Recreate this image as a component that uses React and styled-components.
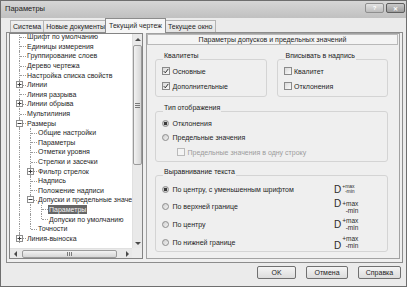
import React from 'react';
import styled, { createGlobalStyle, css } from 'styled-components';

const GlobalStyle = createGlobalStyle`
  html, body {
    margin: 0;
    padding: 0;
    background: #ffffff;
  }
  body {
    font-family: "Liberation Sans", Arial, sans-serif;
    font-size: 7px;
    color: #1e1e1e;
  }
  * {
    box-sizing: border-box;
  }
`;

const Window = styled.div`
  width: 407px;
  height: 287px;
  border: 1px solid #6e6e6e;
  background: #ebebeb;
  display: flex;
  flex-direction: column;
  overflow: hidden;
`;

const TitleBar = styled.div`
  flex: none;
  height: 17px;
  display: flex;
  align-items: flex-start;
  justify-content: space-between;
  padding: 2px 1px 0 4px;
  background: linear-gradient(#d6d6d6, #c0c0c0);
`;

const Caption = styled.span`
  font-size: 7.5px;
  line-height: 11px;
  color: #222;
`;

const TitleButtons = styled.div`
  display: flex;
  gap: 2px;
`;

const TitleButton = styled.span`
  width: 19px;
  height: 10px;
  border: 1px solid ${({ $close }) => ($close ? '#5e5e5e' : '#8f8f8f')};
  border-radius: 2px;
  background: ${({ $close }) =>
    $close ? 'linear-gradient(#c9c9c9, #9d9d9d)' : 'linear-gradient(#e2e2e2, #bdbdbd)'};
  display: flex;
  align-items: center;
  justify-content: center;
  font-size: 6px;
  font-weight: bold;
  color: #fdfdfd;
`;

const TabStrip = styled.div`
  flex: none;
  height: 14px;
  display: flex;
  align-items: flex-end;
  padding-left: 9px;
  position: relative;
  z-index: 1;
`;

const Tab = styled.span`
  height: 12px;
  padding: 0 2px;
  margin-right: -1px;
  border: 1px solid #b4b4b4;
  border-bottom: none;
  background: linear-gradient(#f1f1f1, #e4e4e4);
  line-height: 11px;
  white-space: nowrap;

  ${({ $active }) =>
    $active &&
    css`
      height: 15px;
      margin: 0 -1px -1px -2px;
      padding: 0 3px;
      background: #f6f6f6;
      border-color: #8c8c8c;
      line-height: 13px;
      position: relative;
      z-index: 2;
    `}
`;

const TabPanel = styled.div`
  flex: none;
  width: 397px;
  height: 231px;
  margin-left: 5px;
  border: 1px solid #8c8c8c;
  background: #efefef;
  display: flex;
  gap: 3px;
  padding: 0 2px 3px 2px;
`;

const TreeBox = styled.div`
  width: 134px;
  flex: none;
  border: 1px solid #848484;
  background: #ffffff;
  display: grid;
  grid-template-columns: 1fr 10px;
  grid-template-rows: 1fr 10px;
  overflow: hidden;
`;

const TreeList = styled.div`
  overflow: hidden;
  padding: 0 0 0 4px;
  margin-top: -2px;
`;

const TreeRow = styled.div`
  height: 9.6px;
  display: flex;
  align-items: center;
  white-space: nowrap;
`;

const dotted = '1px dotted #9a9a9a';

const Guide = styled.span`
  position: relative;
  flex: none;
  width: 11px;
  align-self: stretch;

  ${({ $line }) =>
    $line &&
    css`
      &::before {
        content: '';
        position: absolute;
        left: 5px;
        top: 0;
        bottom: 0;
        border-left: ${dotted};
      }
    `}
`;

const Branch = styled.span`
  position: relative;
  flex: none;
  width: 11px;
  align-self: stretch;

  &::before {
    content: '';
    position: absolute;
    left: 5px;
    top: 0;
    height: ${({ $last }) => ($last ? '50%' : '100%')};
    border-left: ${dotted};
  }
  &::after {
    content: '';
    position: absolute;
    left: 6px;
    right: -1px;
    top: 50%;
    border-top: ${dotted};
  }
`;

const Expander = styled.span`
  position: absolute;
  left: 2px;
  top: 1.3px;
  width: 7px;
  height: 7px;
  border: 1px solid #8e8e8e;
  background: #ffffff;
  z-index: 1;
  display: flex;
`;

const Label = styled.span`
  margin-left: 1px;
  padding: 0 1px;
  line-height: 9px;
  color: ${({ $selected }) => ($selected ? '#f4f4f4' : '#1e1e1e')};
  background: ${({ $selected }) => ($selected ? '#666666' : 'transparent')};
`;

const VScroll = styled.div`
  display: flex;
  flex-direction: column;
  background: #e9e9e9;
  border-left: 1px solid #e0e0e0;
`;

const HScroll = styled.div`
  display: flex;
  align-items: center;
  background: #e9e9e9;
  border-top: 1px solid #e0e0e0;
`;

const Corner = styled.div`
  background: #ececec;
`;

const ArrowCell = styled.span`
  flex: none;
  width: 10px;
  height: 10px;
  display: flex;
  align-items: center;
  justify-content: center;
`;

const Thumb = styled.span`
  flex: none;
  display: flex;
  align-items: center;
  justify-content: center;
  border: 1px solid #9b9b9b;
  border-radius: 2px;
  ${({ $vertical }) =>
    $vertical
      ? css`
          margin: 1px 0 0 0;
          width: 9px;
          height: 120px;
          background: linear-gradient(90deg, #f2f2f2, #d6d6d6);
        `
      : css`
          margin-left: 2px;
          width: 95px;
          height: 8px;
          background: linear-gradient(#f2f2f2, #d6d6d6);
        `}
`;

const Spacer = styled.span`
  flex: 1;
`;

const SettingsPanel = styled.div`
  flex: 1;
  border: 1px solid #a2a2a2;
  background: #efefef;
  display: flex;
  flex-direction: column;
`;

const PanelHeader = styled.div`
  height: 11px;
  margin: 0 1px 0 0;
  border: 1px solid #b9b9b9;
  background: #f4f4f4;
  text-align: center;
  line-height: 9px;
`;

const PanelBody = styled.div`
  padding: 0 11px 0 8px;
  display: flex;
  flex-direction: column;
`;

const GroupRow = styled.div`
  display: flex;
  gap: 10px;
  margin-top: 7px;
`;

const Group = styled.fieldset`
  margin: ${({ $top }) => $top || 0}px 0 0 0;
  flex: 1;
  min-width: 0;
  border: 1px solid #d4d4d4;
  border-radius: 3px;
  padding: 0 0 ${({ $pb }) => $pb || 4}px 6px;
  display: flex;
  flex-direction: column;
  gap: ${({ $gap }) => $gap || 5}px;

  legend {
    font-size: 7px;
    line-height: 8px;
    padding: 0 1px 6px;
    margin-left: 1px;
    color: #222;
  }
`;

const Option = styled.div`
  height: ${({ $tall }) => ($tall ? 14 : 10)}px;
  display: flex;
  align-items: center;
  gap: 2.5px;
  padding-left: ${({ $indent }) => $indent || 0}px;
  color: ${({ $disabled }) => ($disabled ? '#9c9c9c' : '#1e1e1e')};
  white-space: nowrap;
`;

const CheckBox = styled.span`
  flex: none;
  width: 8px;
  height: 8px;
  border: 1px solid ${({ $disabled }) => ($disabled ? '#bababa' : '#8a8a8a')};
  background: ${({ $disabled }) =>
    $disabled ? '#f4f4f4' : 'linear-gradient(135deg, #d9d9d9, #fbfbfb)'};
  display: flex;
  align-items: center;
  justify-content: center;
`;

const Radio = styled.span`
  flex: none;
  width: 7px;
  height: 7px;
  margin-right: 1px;
  border-radius: 50%;
  border: 1px solid #8d8d8d;
  background: ${({ $checked }) =>
    $checked
      ? 'radial-gradient(circle, #3a3a3a 0 1.5px, #cfcfcf 2px)'
      : 'linear-gradient(135deg, #cfcfcf, #f2f2f2)'};
`;

const Sample = styled.div`
  margin-left: auto;
  margin-right: 23px;
  width: 30px;
  height: 14px;
  display: flex;
  gap: 1px;
  align-items: ${({ $align }) =>
    ({ top: 'flex-start', bottom: 'flex-end', center: 'center', small: 'center' })[$align]};
  color: #2a2a2a;
`;

const BigD = styled.span`
  font-size: 10px;
  line-height: 7px;
`;

const Limits = styled.span`
  display: flex;
  flex-direction: column;
  align-items: flex-end;
  font-size: ${({ $small }) => ($small ? 5 : 6.5)}px;
  line-height: ${({ $small }) => ($small ? 5.5 : 7)}px;
`;

const Footer = styled.div`
  flex: none;
  display: flex;
  justify-content: flex-end;
  gap: 10px;
  margin-top: 3px;
  padding-right: 5px;
`;

const Button = styled.span`
  width: ${({ $w }) => $w}px;
  height: 13px;
  border: 1px solid #707070;
  border-radius: 2px;
  background: linear-gradient(#f4f4f4, #dcdcdc);
  display: flex;
  align-items: center;
  justify-content: center;
`;

const Arrow = ({ dir }) => {
  const pts = {
    up: '1,4 4,1 7,4',
    down: '1,1 4,4 7,1',
    left: '4,1 1,4 4,7',
    right: '1,1 4,4 1,7',
  }[dir];
  const vert = dir === 'up' || dir === 'down';
  return (
    <svg width={vert ? 8 : 5} height={vert ? 5 : 8} viewBox={vert ? '0 0 8 5' : '0 0 5 8'}>
      <polygon points={pts} fill="#4a4a4a" />
    </svg>
  );
};

const ToggleIcon = ({ open }) => (
  <svg width="5" height="5" viewBox="0 0 5 5">
    <line x1="0.5" y1="2.5" x2="4.5" y2="2.5" stroke="#3c3c3c" strokeWidth="1" />
    {!open && <line x1="2.5" y1="0.5" x2="2.5" y2="4.5" stroke="#3c3c3c" strokeWidth="1" />}
  </svg>
);

const Check = () => (
  <svg width="6" height="6" viewBox="0 0 6 6">
    <path d="M0.8 3.2 L2.3 4.8 L5.3 0.9" fill="none" stroke="#2e2e2e" strokeWidth="1" />
  </svg>
);

const treeItems = [
  { text: 'Шрифт по умолчанию', guides: [] },
  { text: 'Единицы измерения', guides: [] },
  { text: 'Группирование слоев', guides: [] },
  { text: 'Дерево чертежа', guides: [] },
  { text: 'Настройка списка свойств', guides: [] },
  { text: 'Линии', guides: [], toggle: 'closed' },
  { text: 'Линия разрыва', guides: [] },
  { text: 'Линии обрыва', guides: [], toggle: 'closed' },
  { text: 'Мультилиния', guides: [] },
  { text: 'Размеры', guides: [], toggle: 'open' },
  { text: 'Общие настройки', guides: [true] },
  { text: 'Параметры', guides: [true] },
  { text: 'Отметки уровня', guides: [true] },
  { text: 'Стрелки и засечки', guides: [true] },
  { text: 'Фильтр стрелок', guides: [true], toggle: 'closed' },
  { text: 'Надпись', guides: [true] },
  { text: 'Положение надписи', guides: [true] },
  { text: 'Допуски и предельные значения', guides: [true], toggle: 'open' },
  { text: 'Параметры', guides: [true, true], selected: true },
  { text: 'Допуски по умолчанию', guides: [true, true], last: true },
  { text: 'Точности', guides: [true], last: true },
  { text: 'Линия-выноска', guides: [], toggle: 'closed' },
];

const alignRows = [
  { text: 'По центру, с уменьшенным шрифтом', align: 'small', checked: true },
  { text: 'По верхней границе', align: 'top' },
  { text: 'По центру', align: 'center' },
  { text: 'По нижней границе', align: 'bottom' },
];

export default function App() {
  return (
    <>
      <GlobalStyle />
      <Window>
        <TitleBar>
          <Caption>Параметры</Caption>
          <TitleButtons>
            <TitleButton>?</TitleButton>
            <TitleButton $close>✕</TitleButton>
          </TitleButtons>
        </TitleBar>

        <TabStrip>
          <Tab>Система</Tab>
          <Tab>Новые документы</Tab>
          <Tab $active>Текущий чертеж</Tab>
          <Tab>Текущее окно</Tab>
        </TabStrip>

        <TabPanel>
          <TreeBox>
            <TreeList>
              {treeItems.map((item, i) => (
                <TreeRow key={i}>
                  {item.guides.map((on, g) => (
                    <Guide key={g} $line={on} />
                  ))}
                  <Branch $last={item.last}>
                    {item.toggle && (
                      <Expander>
                        <ToggleIcon open={item.toggle === 'open'} />
                      </Expander>
                    )}
                  </Branch>
                  <Label $selected={item.selected}>{item.text}</Label>
                </TreeRow>
              ))}
            </TreeList>
            <VScroll>
              <ArrowCell><Arrow dir="up" /></ArrowCell>
              <Thumb $vertical>
                <svg width="5" height="5" viewBox="0 0 5 5">
                  <path d="M0 0.5H5M0 2.5H5M0 4.5H5" stroke="#7a7a7a" strokeWidth="1" />
                </svg>
              </Thumb>
              <Spacer />
              <ArrowCell><Arrow dir="down" /></ArrowCell>
            </VScroll>
            <HScroll>
              <ArrowCell><Arrow dir="left" /></ArrowCell>
              <Thumb>
                <svg width="5" height="4" viewBox="0 0 5 4">
                  <path d="M0.5 0V4M2.5 0V4M4.5 0V4" stroke="#7a7a7a" strokeWidth="1" />
                </svg>
              </Thumb>
              <Spacer />
              <ArrowCell><Arrow dir="right" /></ArrowCell>
            </HScroll>
            <Corner />
          </TreeBox>

          <SettingsPanel>
            <PanelHeader>Параметры допусков и предельных значений</PanelHeader>
            <PanelBody>
              <GroupRow>
                <Group $pb={5}>
                  <legend>Квалитеты</legend>
                  <Option>
                    <CheckBox><Check /></CheckBox>
                    Основные
                  </Option>
                  <Option>
                    <CheckBox><Check /></CheckBox>
                    Дополнительные
                  </Option>
                </Group>
                <Group $pb={5}>
                  <legend>Вписывать в надпись</legend>
                  <Option>
                    <CheckBox />
                    Квалитет
                  </Option>
                  <Option>
                    <CheckBox />
                    Отклонения
                  </Option>
                </Group>
              </GroupRow>

              <Group $top={7} $gap={4.5} $pb={4}>
                <legend>Тип отображения</legend>
                <Option>
                  <Radio $checked />
                  Отклонения
                </Option>
                <Option>
                  <Radio />
                  Предельные значения
                </Option>
                <Option $indent={15} $disabled>
                  <CheckBox $disabled />
                  Предельные значения в одну строку
                </Option>
              </Group>

              <Group $top={6} $gap={3.7} $pb={2}>
                <legend>Выравнивание текста</legend>
                {alignRows.map((row) => (
                  <Option key={row.text} $tall>
                    <Radio $checked={row.checked} />
                    {row.text}
                    <Sample $align={row.align}>
                      <BigD>D</BigD>
                      <Limits $small={row.align === 'small'}>
                        <span>+max</span>
                        <span>-min</span>
                      </Limits>
                    </Sample>
                  </Option>
                ))}
              </Group>
            </PanelBody>
          </SettingsPanel>
        </TabPanel>

        <Footer>
          <Button $w={39}>OK</Button>
          <Button $w={42}>Отмена</Button>
          <Button $w={43}>Справка</Button>
        </Footer>
      </Window>
    </>
  );
}
